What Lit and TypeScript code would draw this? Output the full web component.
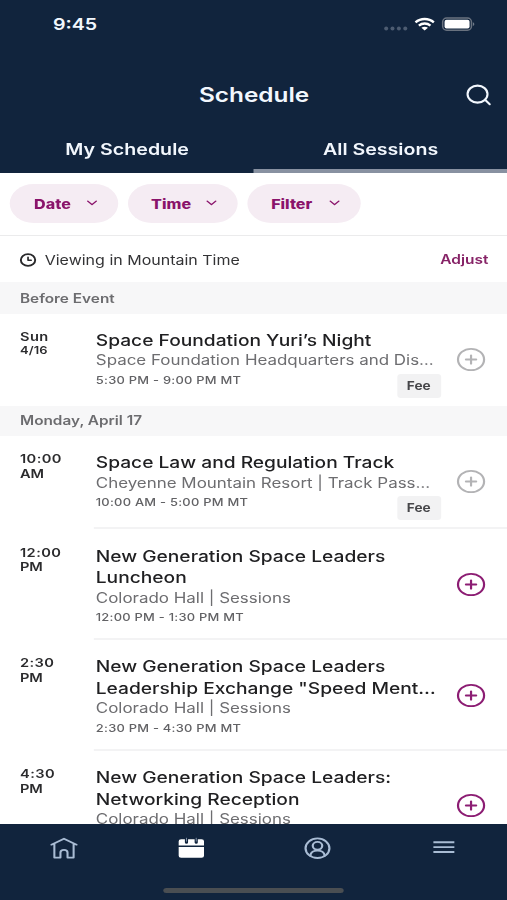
import { LitElement, html, css, nothing } from "lit";
import { customElement, property } from "lit/decorators.js";
import { classMap } from "lit/directives/class-map.js";

interface Session {
  when: [string, string];
  title: string[];
  place: string;
  time?: string;
  fee?: boolean;
}

const BEFORE: Session[] = [
  {
    when: ["Sun", "4/16"],
    title: ["Space Foundation Yuri’s Night"],
    place: "Space Foundation Headquarters and Dis…",
    time: "5:30 PM - 9:00 PM MT",
    fee: true,
  },
];

const MONDAY: Session[] = [
  {
    when: ["10:00", "AM"],
    title: ["Space Law and Regulation Track"],
    place: "Cheyenne Mountain Resort | Track Pass…",
    time: "10:00 AM - 5:00 PM MT",
    fee: true,
  },
  {
    when: ["12:00", "PM"],
    title: ["New Generation Space Leaders", "Luncheon"],
    place: "Colorado Hall | Sessions",
    time: "12:00 PM - 1:30 PM MT",
  },
  {
    when: ["2:30", "PM"],
    title: ["New Generation Space Leaders", 'Leadership Exchange "Speed Ment…'],
    place: "Colorado Hall | Sessions",
    time: "2:30 PM - 4:30 PM MT",
  },
  {
    when: ["4:30", "PM"],
    title: ["New Generation Space Leaders:", "Networking Reception"],
    place: "Colorado Hall | Sessions",
  },
];

@customElement("session-row")
class SessionRow extends LitElement {
  @property({ attribute: false }) session!: Session;

  static styles = css`
    :host { display: block; }
    .row { display: flex; padding-left: 16.4px; height: 93.4px; }
    .row.tall { height: 110.75px; }
    .row.last { height: 92px; }
    .row.last .text { padding-top: 15.6px; }
    .when {
      width: 60.6px; flex: none; box-sizing: border-box; padding-top: 16.2px;
      font-size: 12px; line-height: 14.6px; font-weight: 600; color: #2b2b2d;
      letter-spacing: 0.35px;
    }
    .when .date { font-size: 10.6px; line-height: 12.6px; letter-spacing: 0.1px; }
    .when .half { letter-spacing: -0.1px; }
    .body {
      flex: 1; display: flex; box-sizing: border-box; padding-left: 1.6px;
      border-bottom: 2px solid #f3f3f4;
    }
    .row.last .body { border-bottom: 0; }
    .text { width: 283px; flex: none; padding-top: 16.2px; white-space: nowrap; }
    .title { font-size: 15.74px; line-height: 21.5px; font-weight: 500; color: #1f1f21; }
    .place { font-size: 13.9px; line-height: 19.5px; color: #6d6d70; }
    .meta { display: flex; height: 20px; justify-content: space-between; align-items: flex-start; }
    .time { font-size: 10.6px; line-height: 20.8px; font-weight: 500; color: #626265; letter-spacing: 0.2px; }
    .fee {
      width: 36px; height: 24px; margin-top: 3px; border-radius: 3px;
      background: #f2f2f3; color: #47474a; text-align: center;
      font-size: 11.2px; line-height: 24px; font-weight: 700;
    }
    .add { flex: 1; display: flex; align-items: center; justify-content: center; padding: 1px 4.2px 0 0; color: #8c1d73; }
    .add.muted { color: #b3b3b5; padding-top: 0; }
    .row.last .add { padding-bottom: 1.4px; }
    .add svg { display: block; }
  `;

  render() {
    const s = this.session;
    const [a, b] = s.when;
    return html`
      <div class=${classMap({ row: true, tall: s.title.length > 1, last: a === "Sun" })}>
        <div class="when">
          <div>${a}</div>
          <div class=${b.includes("/") ? "date" : "half"}>${b}</div>
        </div>
        <div class="body">
          <div class="text">
            ${s.title.map((t) => html`<div class="title">${t}</div>`)}
            <div class="place">${s.place}</div>
            ${s.time
              ? html`<div class="meta">
                  <span class="time">${s.time}</span>
                  ${s.fee ? html`<span class="fee">Fee</span>` : nothing}
                </div>`
              : nothing}
          </div>
          <div class=${classMap({ add: true, muted: !!s.fee })}>
            <svg width="25" height="25" viewBox="0 0 25 25" fill="none" stroke="currentColor" stroke-width="1.8" stroke-linecap="round">
              <circle cx="12.5" cy="12.5" r="10.7" />
              <path d="M12.5 8.3v8.4M8.3 12.5h8.4" />
            </svg>
          </div>
        </div>
      </div>
    `;
  }
}

@customElement("app-root")
class AppRoot extends LitElement {
  static styles = css`
    :host { display: block; width: 507px; height: 900px; overflow: hidden; background: #fff; }
    /* The phone layout is 416 wide and is widened to fill the window. */
    .phone {
      width: 416px; height: 900px; display: flex; flex-direction: column;
      transform: scaleX(1.21875); transform-origin: 0 0;
      font-family: "Inter", "Liberation Sans", sans-serif; color: #232325;
    }
    svg { display: block; }
    header { flex: none; height: 172.5px; background: #11243d; color: #f2f7fd; display: flex; flex-direction: column; }
    .status { height: 48px; display: flex; justify-content: space-between; align-items: center; padding: 0 25px 0 43.4px; }
    .clock { font-size: 16.1px; line-height: 20px; font-weight: 600; }
    .bar { height: 94px; display: grid; grid-template-columns: 48px 1fr 48px; align-items: center; }
    .bar h1 { grid-column: 2; margin: 0; padding: 0 0 0 1px; text-align: center; font-size: 20px; line-height: 24px; font-weight: 600; }
    .bar svg { justify-self: center; margin-left: 2px; }
    .tabs { flex: 1; display: flex; }
    .tab {
      flex: 1; box-sizing: border-box; text-align: center; font-size: 16.1px; line-height: 20px; font-weight: 600;
      border-bottom: 4px solid transparent;
    }
    .tab.on { border-color: #8891a1; }
    .tab span { display: block; margin: -3px 0 0 0.6px; }

    .chips { flex: none; height: 63.5px; box-sizing: border-box; padding: 11.5px 8.2px 0; display: flex; gap: 7.8px; border-bottom: 1.3px solid #ebebec; }
    .chip {
      height: 39px; border-radius: 20px; background: #f5ecf3; color: #8a136b; box-sizing: border-box;
      display: flex; align-items: center; justify-content: space-between; padding: 0 16.4px 0 19.8px;
      font-size: 13.2px; font-weight: 800; width: 88.6px;
    }
    .chip svg { margin-top: -1px; }
    .chip.time { width: 90.3px; padding-left: 19.4px; }
    .chip.filter { width: 93px; }
    .zone { flex: none; height: 46px; display: flex; align-items: center; padding: 1px 15.3px 0 15.6px; font-size: 13.14px; color: #333335; box-sizing: border-box; }
    .zone span { margin-left: 7.1px; }
    .zone b { margin-left: auto; font-weight: 600; font-size: 12.7px; color: #862266; }
    .section { flex: none; height: 32px; background: #f7f7f8; padding-left: 16.4px; font-size: 12.6px; line-height: 33px; font-weight: 600; color: #6c6c6f; }
    .section.day { height: 30px; line-height: 30.4px; }
    main { flex: 1; min-height: 0; overflow: hidden; }

    nav { flex: none; height: 76px; background: #11243d; color: #a9bcd4; display: flex; flex-direction: column; align-items: center; }
    .icons { width: 100%; height: 48px; display: grid; grid-template-columns: repeat(4, 1fr); place-items: center; padding-left: 1px; box-sizing: border-box; }
    .grip { width: 148.2px; height: 5px; border-radius: 3px; background: #4a4e52; margin-top: 15.5px; }
  `;

  private chip(label: string, kind: string) {
    return html`<div class="chip ${kind}">
      ${label}
      <svg width="9" height="6" viewBox="0 0 9 6" fill="none" stroke="currentColor" stroke-width="1.3" stroke-linecap="round" stroke-linejoin="round">
        <path d="M1 1.1l3.5 3.5L8 1.1" />
      </svg>
    </div>`;
  }

  render() {
    return html`
      <div class="phone">
        <header>
          <div class="status">
            <span class="clock">9:45</span>
            <svg width="77.1" height="20" viewBox="383 14 94 20" preserveAspectRatio="none">
              <g fill="#4d5c71">
                <circle cx="386.5" cy="28.5" r="2" /><circle cx="392.8" cy="28.5" r="2" />
                <circle cx="399.2" cy="28.5" r="2" /><circle cx="405.6" cy="28.5" r="2" />
              </g>
              <g fill="none" stroke="#fff" stroke-width="2.4">
                <path d="M415.8 22.4C421 17.8 429 17.8 434.2 22.4" />
                <path d="M419.2 25.6C422.6 22.7 427.4 22.7 430.8 25.6" />
              </g>
              <path d="M421.7 27.8C423.8 26.3 426.2 26.3 428.3 27.8L425 30.4z" fill="#fff" />
              <rect x="443" y="18" width="28.8" height="12.2" rx="4" fill="none" stroke="#69727f" stroke-width="1.5" />
              <rect x="444.9" y="19.8" width="25" height="8.8" rx="2" fill="#fff" />
              <path d="M473.2 22.3c2 .6 2 3.2 0 3.8z" fill="#6f7a89" />
            </svg>
          </div>
          <div class="bar">
            <h1>Schedule</h1>
            <svg width="24.6" height="24" viewBox="464 82 30 24" preserveAspectRatio="none" fill="none" stroke="currentColor" stroke-width="2.1" stroke-linecap="round">
              <ellipse cx="477.2" cy="93.1" rx="10" ry="8.5" />
              <path d="M485 99.1L489.4 103.2" />
            </svg>
          </div>
          <div class="tabs">
            <div class="tab"><span>My Schedule</span></div>
            <div class="tab on"><span>All Sessions</span></div>
          </div>
        </header>
        <div class="chips">
          ${this.chip("Date", "date")}${this.chip("Time", "time")}${this.chip("Filter", "filter")}
        </div>
        <div class="zone">
          <svg width="14" height="14" viewBox="0 0 14 14" fill="none" stroke="#29292b" stroke-width="1.6" stroke-linecap="round" stroke-linejoin="round">
            <circle cx="7" cy="7" r="5.9" />
            <path d="M7 4.2V7.3H9.6" stroke-width="1.4" />
          </svg>
          <span>Viewing in Mountain Time</span>
          <b>Adjust</b>
        </div>
        <main>
          <div class="section">Before Event</div>
          ${BEFORE.map((s) => html`<session-row .session=${s}></session-row>`)}
          <div class="section day">Monday, April 17</div>
          ${MONDAY.map((s) => html`<session-row .session=${s}></session-row>`)}
        </main>
        <nav>
          <div class="icons">
            <svg width="23" height="22" viewBox="0 0 23 22" fill="none" stroke="currentColor" stroke-width="1.7" stroke-linecap="round" stroke-linejoin="round">
              <path d="M1.2 7.7L11.5 1.7L21.8 7.7M3.6 6.6V20.6H8.6V15.6C8.6 11.9 14.4 11.9 14.4 15.6V20.6H19.4V6.6" />
            </svg>
            <svg width="22" height="22" viewBox="0 0 22 22">
              <path d="M.6 8.4V4.3A2 2 0 0 1 2.6 2.3H19.4A2 2 0 0 1 21.4 4.3V8.4zM.6 10H21.4V18.8A2 2 0 0 1 19.4 20.8H2.6A2 2 0 0 1 .6 18.8z" fill="#fff" />
              <path d="M7 1.2V5.4M15 1.2V5.4" stroke="#11243d" stroke-width="2.6" stroke-linecap="round" />
              <path d="M7 1.2V4.2M15 1.2V4.2" stroke="#8d9bb0" stroke-width=".8" stroke-linecap="round" />
            </svg>
            <svg width="23" height="23" viewBox="0 0 23 23" fill="none" stroke="currentColor" stroke-width="1.8" stroke-linecap="round">
              <circle cx="11.5" cy="11.2" r="9.8" />
              <circle cx="11.5" cy="8.8" r="3.9" />
              <path d="M5.6 18.8C6 11.7 17 11.7 17.4 18.8" />
            </svg>
            <svg width="18" height="14" viewBox="0 0 18 14" fill="none" stroke="currentColor" stroke-width="1.9">
              <path d="M.6 1.2H18M.6 6.1H18M.6 11H18" />
            </svg>
          </div>
          <div class="grip"></div>
        </nav>
      </div>
    `;
  }
}
